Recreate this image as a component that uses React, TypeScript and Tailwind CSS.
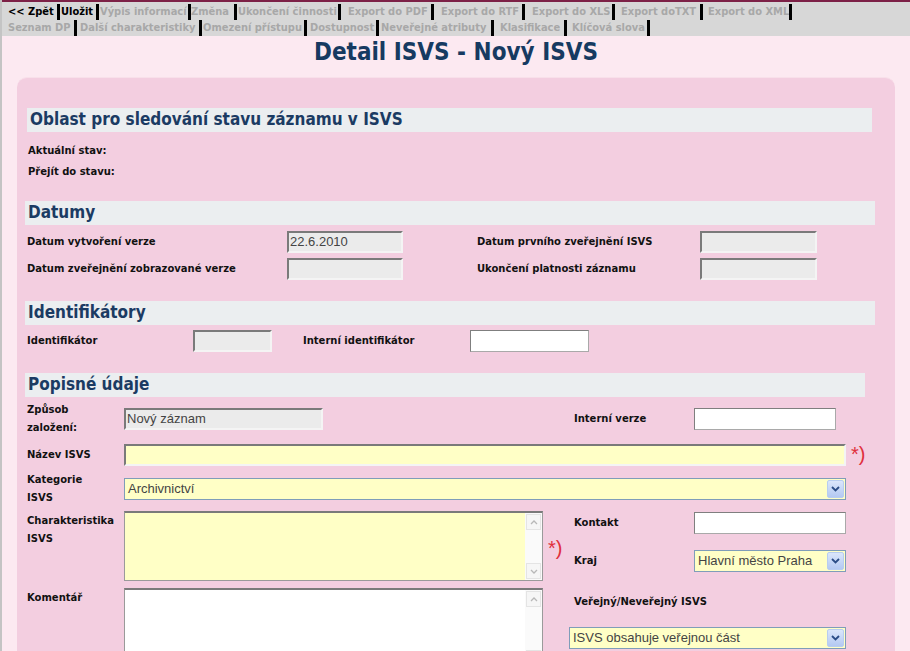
import React from 'react';

type NavItem = { label: string; w: string; pl: string; active?: boolean };

const navRow1: NavItem[] = [
  { label: '<< Zpět', w: 'w-[52px]', pl: 'pl-0', active: true },
  { label: 'Uložit', w: 'w-[39px]', pl: 'pl-[1px]', active: true },
  { label: 'Výpis informací', w: 'w-[92px]', pl: 'pl-[1px]' },
  { label: 'Změna', w: 'w-[46px]', pl: 'pl-0' },
  { label: 'Ukončení činnosti', w: 'w-[104px]', pl: 'pl-[1px]' },
  { label: 'Export do PDF', w: 'w-[93px]', pl: 'pl-[7px]' },
  { label: 'Export do RTF', w: 'w-[91px]', pl: 'pl-[7px]' },
  { label: 'Export do XLS', w: 'w-[90px]', pl: 'pl-[7px]' },
  { label: 'Export doTXT', w: 'w-[88px]', pl: 'pl-[6px]' },
  { label: 'Export do XML', w: 'w-[88px]', pl: 'pl-[5px]' },
];

const navRow2: NavItem[] = [
  { label: 'Seznam DP', w: 'w-[69px]', pl: 'pl-0' },
  { label: 'Další charakteristiky', w: 'w-[125px]', pl: 'pl-[3px]' },
  { label: 'Omezení přístupu', w: 'w-[105px]', pl: 'pl-[1px]' },
  { label: 'Dostupnost', w: 'w-[72px]', pl: 'pl-[3px]' },
  { label: 'Neveřejné atributy', w: 'w-[115px]', pl: 'pl-[2px]' },
  { label: 'Klasifikace', w: 'w-[73px]', pl: 'pl-[6px]' },
  { label: 'Klíčová slova', w: 'w-[83px]', pl: 'pl-[5px]' },
];

const label = "text-[10px] leading-[18px] font-bold font-['DejaVu_Sans'] text-[#111]";
const valueFont = "font-['Liberation_Sans'] text-[13px] text-[#444]";
const grayInput =
  'h-[22px] bg-[#ebebeb] border-2 border-t-[#7a7a7a] border-l-[#7a7a7a] border-b-[#f4f4f4] border-r-[#f4f4f4]';
const whiteInput =
  'h-[22px] bg-white border border-[#a9a9a9] border-t-[#7f7f7f] border-l-[#7f7f7f]';
const yellowInput =
  'h-[22px] bg-[#ffffc6] border-2 border-t-[#7a7a7a] border-l-[#7a7a7a] border-b-[#f4f4f4] border-r-[#f4f4f4]';

function NavRow({ items }: { items: NavItem[] }) {
  return (
    <div className="flex h-[16px]">
      {items.map((it) => (
        <div key={it.label} className={`${it.w} ${it.pl} flex items-center justify-between`}>
          <span
            className={`whitespace-nowrap text-[11px] font-bold font-['DejaVu_Sans_Condensed'] ${
              it.active ? 'text-black' : 'text-[#a8a8a8]'
            }`}
          >
            {it.label}
          </span>
          <span className="w-[3px] h-[16px] bg-black shrink-0" />
        </div>
      ))}
    </div>
  );
}

function SectionBar({ title, w }: { title: string; w: string }) {
  return (
    <div className={`${w} h-[24px] bg-[#ebeef0] flex items-center pl-[3px]`}>
      <span className="text-[17px] font-bold font-['DejaVu_Sans_Condensed'] text-[#1b3b63]">{title}</span>
    </div>
  );
}

function Chevron() {
  return (
    <svg width="9" height="6" viewBox="0 0 9 6">
      <path d="M1 1 L4.5 4.5 L8 1" fill="none" stroke="#2b4c86" strokeWidth="1.8" />
    </svg>
  );
}

function Select({ value, w }: { value: string; w: string }) {
  return (
    <div className={`${w} h-[22px] bg-[#ffffc6] border border-[#7f9db9] flex items-center`}>
      <span className={`flex-1 pl-[3px] ${valueFont} text-[#222] whitespace-nowrap`}>{value}</span>
      <div className="w-[17px] h-[18px] mr-[1px] rounded-[2px] border border-[#b8cdf0] bg-gradient-to-b from-[#dbe6fb] to-[#b4c9f2] flex items-center justify-center">
        <Chevron />
      </div>
    </div>
  );
}

function ScrollArrow({ up }: { up?: boolean }) {
  return (
    <div className="w-[15px] h-[16px] border border-[#e4e4e4] bg-[#f6f6f6] flex items-center justify-center">
      <svg width="8" height="5" viewBox="0 0 8 5">
        <path d={up ? 'M1 4 L4 1 L7 4' : 'M1 1 L4 4 L7 1'} fill="none" stroke="#b8b8b8" strokeWidth="1.3" />
      </svg>
    </div>
  );
}

function TextArea({ bg, h }: { bg: string; h: string }) {
  return (
    <div className={`w-[419px] ${h} ${bg} border border-[#9a9a9a] border-t-[#7a7a7a] border-t-2 flex justify-end`}>
      <div className="w-[17px] h-full bg-[#fafafa] flex flex-col justify-between p-[1px]">
        <ScrollArrow up />
        <ScrollArrow />
      </div>
    </div>
  );
}

function Req() {
  return <span className="font-['Liberation_Sans'] text-[20px] text-[#e0303c] leading-none">*)</span>;
}

export default function App() {
  return (
    <div className="min-h-screen w-[910px] bg-[#fce9f1] border-l-[2px] border-[#c4c4c4] overflow-hidden">
      <div className="h-[2px] bg-[#7d2147]" />
      <nav className="bg-[#d7d7d7] pl-[6px] pt-[2px] h-[34px]">
        <NavRow items={navRow1} />
        <NavRow items={navRow2} />
      </nav>

      <div className="h-[41px] flex items-start justify-center pt-[1px]">
        <h1 className="text-[24px] font-bold font-['DejaVu_Sans_Condensed'] text-[#163a61] leading-[30px]">
          Detail ISVS - Nový ISVS
        </h1>
      </div>

      <div className="ml-[15px] w-[878px] min-h-[600px] rounded-t-[10px] bg-[#f3cee0] border-t border-[#f8e0ea] pt-[30px]">
        {/* Oblast */}
        <div className="pl-[10px]">
          <SectionBar title="Oblast pro sledování stavu záznamu v ISVS" w="w-[845px]" />
          <div className="pt-[10px]">
            <div className={`${label} h-[21px] pl-[1px]`}>Aktuální stav:</div>
            <div className={`${label} h-[21px] pl-[1px]`}>Přejít do stavu:</div>
          </div>
        </div>

        {/* Datumy */}
        <div className="pl-[8px] mt-[17px]">
          <SectionBar title="Datumy" w="w-[850px]" />
          <div className="grid grid-cols-[262px_190px_223px_117px] gap-y-[5px] pt-[6px] items-center">
            <div className={`${label} pl-[2px]`}>Datum vytvoření verze</div>
            <div className={`${grayInput} w-[116px] flex items-center pl-[1px] ${valueFont}`}>22.6.2010</div>
            <div className={label}>Datum prvního zveřejnění ISVS</div>
            <div className={`${grayInput} w-[117px]`} />
            <div className={`${label} pl-[2px]`}>Datum zveřejnění zobrazované verze</div>
            <div className={`${grayInput} w-[116px]`} />
            <div className={label}>Ukončení platnosti záznamu</div>
            <div className={`${grayInput} w-[117px]`} />
          </div>
        </div>

        {/* Identifikátory */}
        <div className="pl-[8px] mt-[21px]">
          <SectionBar title="Identifikátory" w="w-[850px]" />
          <div className="grid grid-cols-[168px_110px_167px_119px] pt-[5px] items-center">
            <div className={`${label} pl-[2px]`}>Identifikátor</div>
            <div className={`${grayInput} w-[79px]`} />
            <div className={label}>Interní identifikátor</div>
            <div className={`${whiteInput} w-[119px]`} />
          </div>
        </div>

        {/* Popisné údaje */}
        <div className="pl-[8px] mt-[21px]">
          <SectionBar title="Popisné údaje" w="w-[840px]" />
          <div className="pl-[2px] pt-[4px] flex flex-col">
            <div className="flex items-center h-[36px]">
              <div className={`${label} w-[97px]`}>
                Způsob
                <br />
                založení:
              </div>
              <div className={`${grayInput} w-[199px] flex items-center pl-[1px] ${valueFont}`}>
                Nový záznam
              </div>
              <div className={`${label} ml-[251px] w-[120px]`}>Interní verze</div>
              <div className={`${whiteInput} w-[142px]`} />
            </div>

            <div className="flex items-center h-[33px] mt-[1px]">
              <div className={`${label} w-[97px]`}>Název ISVS</div>
              <div className={`${yellowInput} w-[722px]`} />
              <span className="ml-[5px]">
                <Req />
              </span>
            </div>

            <div className="flex items-center h-[36px]">
              <div className={`${label} w-[97px]`}>
                Kategorie
                <br />
                ISVS
              </div>
              <Select value="Archivnictví" w="w-[722px]" />
            </div>

            <div className="flex mt-[4px] h-[77px]">
              <div className={`${label} w-[97px] pt-[1px]`}>
                Charakteristika
                <br />
                ISVS
              </div>
              <TextArea bg="bg-[#ffffc6]" h="h-[70px]" />
              <div className="w-[31px] pl-[5px] pt-[26px]">
                <Req />
              </div>
              <div className="flex flex-col">
                <div className="flex items-center h-[23px]">
                  <div className={`${label} w-[120px]`}>Kontakt</div>
                  <div className={`${whiteInput} w-[152px]`} />
                </div>
                <div className="flex items-center h-[22px] mt-[16px]">
                  <div className={`${label} w-[120px]`}>Kraj</div>
                  <Select value="Hlavní město Praha" w="w-[152px]" />
                </div>
              </div>
            </div>

            <div className="flex">
              <div className={`${label} w-[97px] pt-[1px]`}>Komentář</div>
              <TextArea bg="bg-white" h="h-[80px]" />
              <div className="flex flex-col ml-[26px]">
                <div className={`${label} pl-[5px] pt-[5px] h-[39px]`}>Veřejný/Neveřejný ISVS</div>
                <Select value="ISVS obsahuje veřejnou část" w="w-[277px]" />
              </div>
            </div>
          </div>
        </div>
      </div>
    </div>
  );
}
